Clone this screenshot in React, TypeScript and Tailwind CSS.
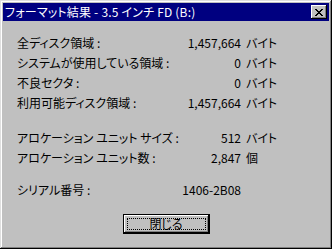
import React from 'react';

const rowsTop = [
  { label: '全ディスク領域 :', value: '1,457,664', unit: 'バイト' },
  { label: 'システムが使用している領域 :', value: '0', unit: 'バイト' },
  { label: '不良セクタ :', value: '0', unit: 'バイト' },
  { label: '利用可能ディスク領域 :', value: '1,457,664', unit: 'バイト' },
];

const rowsAlloc = [
  { label: 'アロケーション ユニット サイズ :', value: '512', unit: 'バイト' },
  { label: 'アロケーション ユニット数 :', value: '2,847', unit: '個' },
];

const Row: React.FC<{ label: string; value: string; unit?: string }> = ({ label, value, unit }) => (
  <div className="flex h-[20px] items-center leading-[20px] whitespace-nowrap">
    <span className="w-[153px]">{label}</span>
    <span className="w-[71px] text-right">{value}</span>
    {unit && <span className="ml-[5px]">{unit}</span>}
  </div>
);

const App: React.FC = () => {
  return (
    <div
      className="w-[332px] h-[249px] bg-[#c0c0c0] p-[3px] flex flex-col text-[12px] text-black shadow-[inset_-1px_-1px_#000,inset_1px_1px_#dfdfdf,inset_-2px_-2px_#808080,inset_2px_2px_#fff] [font-feature-settings:'palt']"
      style={{ fontFamily: '"Noto Sans CJK JP", "Noto Sans", sans-serif' }}
    >
      {/* Title bar */}
      <div className="h-[18px] bg-[#000080] flex items-center justify-between pl-[2px] pr-[2px]">
        <span className="text-white leading-[18px] whitespace-nowrap tracking-[0.2px]">フォーマット結果 - 3.5 インチ FD (B:)</span>
        <button
          aria-label="閉じる"
          className="w-[16px] h-[14px] bg-[#c0c0c0] flex items-center justify-center shadow-[inset_-1px_-1px_#000,inset_1px_1px_#fff,inset_-2px_-2px_#808080]"
        >
          <svg width="8" height="7" viewBox="0 0 8 7" shapeRendering="crispEdges">
            <path d="M0 0h2v1h1v1h2v-1h1v-1h2v1h-1v1h-1v1h-1v1h1v1h1v1h1v1h-2v-1h-1v-1h-2v1h-1v1h-2v-1h1v-1h1v-1h1v-1h-1v-1h-1v-1h-1z" fill="#000" />
          </svg>
        </button>
      </div>

      {/* Content */}
      <div className="pl-[14px] mt-[12px]">
        {rowsTop.map((r) => (
          <Row key={r.label} {...r} />
        ))}
        <div className="mt-[15px]">
          {rowsAlloc.map((r) => (
            <Row key={r.label} {...r} />
          ))}
        </div>
        <div className="mt-[12px]">
          <Row label="シリアル番号 :" value="1406-2B08" />
        </div>
      </div>

      <div className="mt-[14px] flex justify-center">
        <button className="w-[87px] h-[20px] bg-[#c0c0c0] border border-black p-[3px] shadow-[inset_-1px_-1px_#000,inset_1px_1px_#fff,inset_-2px_-2px_#808080]">
          <div className="h-full border border-dotted border-black flex items-center justify-center leading-none">
            閉じる
          </div>
        </button>
      </div>
    </div>
  );
};

export default App;
